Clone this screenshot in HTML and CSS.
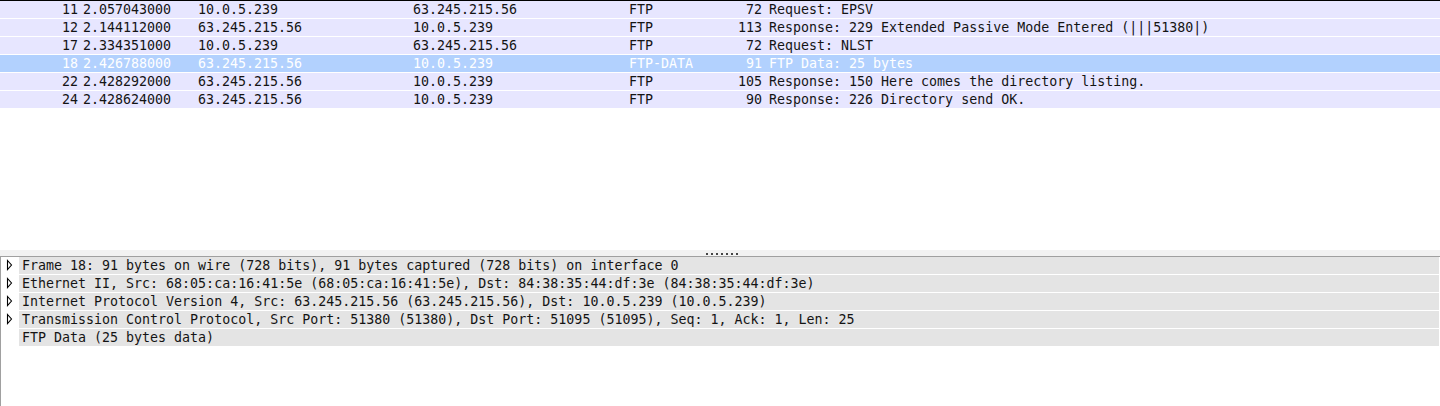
FILE: index.html
```html
<!DOCTYPE html>
<html>
<head>
<meta charset="utf-8">
<link rel="stylesheet" href="styles.css">
</head>
<body>
<div class="top-pane">
  <div class="packet-list">
    <div class="pkt"><span class="c-no">11</span><span class="c-time">2.057043000</span><span class="c-src">10.0.5.239</span><span class="c-dst">63.245.215.56</span><span class="c-proto">FTP</span><span class="c-len">72</span><span class="c-info">Request: EPSV</span></div>
    <div class="pkt"><span class="c-no">12</span><span class="c-time">2.144112000</span><span class="c-src">63.245.215.56</span><span class="c-dst">10.0.5.239</span><span class="c-proto">FTP</span><span class="c-len">113</span><span class="c-info">Response: 229 Extended Passive Mode Entered (|||51380|)</span></div>
    <div class="pkt"><span class="c-no">17</span><span class="c-time">2.334351000</span><span class="c-src">10.0.5.239</span><span class="c-dst">63.245.215.56</span><span class="c-proto">FTP</span><span class="c-len">72</span><span class="c-info">Request: NLST</span></div>
    <div class="pkt selected"><span class="c-no">18</span><span class="c-time">2.426788000</span><span class="c-src">63.245.215.56</span><span class="c-dst">10.0.5.239</span><span class="c-proto">FTP-DATA</span><span class="c-len">91</span><span class="c-info">FTP Data: 25 bytes</span></div>
    <div class="pkt"><span class="c-no">22</span><span class="c-time">2.428292000</span><span class="c-src">63.245.215.56</span><span class="c-dst">10.0.5.239</span><span class="c-proto">FTP</span><span class="c-len">105</span><span class="c-info">Response: 150 Here comes the directory listing.</span></div>
    <div class="pkt"><span class="c-no">24</span><span class="c-time">2.428624000</span><span class="c-src">63.245.215.56</span><span class="c-dst">10.0.5.239</span><span class="c-proto">FTP</span><span class="c-len">90</span><span class="c-info">Response: 226 Directory send OK.</span></div>
  </div>
</div>
<div class="splitter">
  <div class="grip"><i></i><i></i><i></i><i></i><i></i><i></i><i></i></div>
</div>
<div class="details">
  <div class="node"><span class="twisty"><svg width="18" height="17" viewBox="0 0 18 17"><polygon points="6.5,3.5 10.5,8 6.5,12.5" fill="none" stroke="#000" stroke-width="1.1"/></svg></span><span class="label">Frame 18: 91 bytes on wire (728 bits), 91 bytes captured (728 bits) on interface 0</span></div>
  <div class="node"><span class="twisty"><svg width="18" height="17" viewBox="0 0 18 17"><polygon points="6.5,3.5 10.5,8 6.5,12.5" fill="none" stroke="#000" stroke-width="1.1"/></svg></span><span class="label">Ethernet II, Src: 68:05:ca:16:41:5e (68:05:ca:16:41:5e), Dst: 84:38:35:44:df:3e (84:38:35:44:df:3e)</span></div>
  <div class="node"><span class="twisty"><svg width="18" height="17" viewBox="0 0 18 17"><polygon points="6.5,3.5 10.5,8 6.5,12.5" fill="none" stroke="#000" stroke-width="1.1"/></svg></span><span class="label">Internet Protocol Version 4, Src: 63.245.215.56 (63.245.215.56), Dst: 10.0.5.239 (10.0.5.239)</span></div>
  <div class="node"><span class="twisty"><svg width="18" height="17" viewBox="0 0 18 17"><polygon points="6.5,3.5 10.5,8 6.5,12.5" fill="none" stroke="#000" stroke-width="1.1"/></svg></span><span class="label">Transmission Control Protocol, Src Port: 51380 (51380), Dst Port: 51095 (51095), Seq: 1, Ack: 1, Len: 25</span></div>
  <div class="node"><span class="twisty"></span><span class="label">FTP Data (25 bytes data)</span></div>
</div>
</body>
</html>
```

FILE: styles.css
```css
* { box-sizing: border-box; }
html, body {
  margin: 0;
  padding: 0;
  background: #fff;
  width: 1440px;
  height: 406px;
  overflow: hidden;
}
body {
  font-family: "DejaVu Sans Mono", "Liberation Mono", monospace;
  font-size: 13.3px;
  color: #141414;
}
.top-pane {
  height: 250px;
  border-top: 1px solid #000;
  background: #fff;
}
.packet-list {
  display: flex;
  flex-direction: column;
  gap: 1px;
}
.pkt {
  display: grid;
  grid-template-columns: 81px 115px 215px 216px 80px 58px 1fr;
  height: 17px;
  line-height: 17px;
  background: #e7e6ff;
  white-space: nowrap;
}
.pkt.selected {
  background: #b2d1fe;
  color: #fff;
}
.pkt span { overflow: hidden; }
.c-no, .c-len { text-align: right; padding-right: 3px; }
.c-time, .c-src, .c-dst, .c-proto { padding-left: 2px; }
.c-info { padding-left: 4px; }
.splitter {
  height: 6px;
  background: #f2f2f2;
  display: flex;
  justify-content: center;
  padding-top: 3px;
}
.grip {
  display: flex;
  gap: 3px;
  height: 2px;
  margin-left: 4px;
}
.grip i {
  display: block;
  width: 2px;
  height: 2px;
  background: #444;
}
.details {
  height: 150px;
  border-top: 1px solid #a0a0a0;
  border-left: 1px solid #a0a0a0;
  display: flex;
  flex-direction: column;
  gap: 1px;
  padding-right: 1px;
}
.node {
  display: flex;
  height: 17px;
  line-height: 17px;
  white-space: nowrap;
}
.twisty {
  width: 18px;
  flex: none;
  height: 17px;
  background: #fff;
}
.twisty svg { display: block; }
.label {
  flex: 1;
  background: #e4e4e4;
  padding-left: 3px;
}
```
